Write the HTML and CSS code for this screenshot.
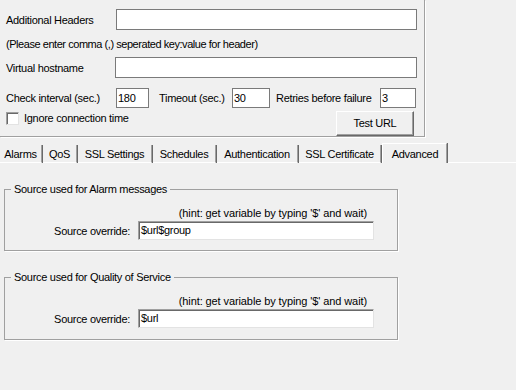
FILE: index.html
```html
<!DOCTYPE html>
<html>
<head>
<meta charset="utf-8">
<link rel="stylesheet" href="styles.css">
</head>
<body>
<div class="top">
  <div class="row r1">
    <span class="lbl w110">Additional Headers</span>
    <span class="box wide"></span>
  </div>
  <div class="row r2">(Please enter comma (,) seperated key:value for header)</div>
  <div class="row r3">
    <span class="lbl w109">Virtual hostname</span>
    <span class="box wide2"></span>
  </div>
  <div class="row r4">
    <span class="lbl w110">Check interval (sec.)</span>
    <span class="box small w33">180</span>
    <span class="lbl w73 ml10">Timeout (sec.)</span>
    <span class="box small w38">30</span>
    <span class="lbl w104 ml6">Retries before failure</span>
    <span class="box small w36">3</span>
  </div>
  <div class="row r5">
    <span class="check"></span>
    <span class="lbl">Ignore connection time</span>
    <span class="btn">Test URL</span>
  </div>
</div>

<div class="tabs">
  <span class="tab t1">Alarms</span>
  <span class="tab t2">QoS</span>
  <span class="tab t3">SSL Settings</span>
  <span class="tab t4">Schedules</span>
  <span class="tab t5">Authentication</span>
  <span class="tab t6">SSL Certificate</span>
  <span class="tab active t7">Advanced</span>
  <span class="tabfill"></span>
</div>

<fieldset class="grp g1">
  <legend>Source used for Alarm messages</legend>
  <div class="hint">(hint: get variable by typing '$' and wait)</div>
  <div class="ovr">
    <span class="olbl">Source override:</span>
    <span class="sunk">$url$group</span>
  </div>
</fieldset>

<fieldset class="grp g2">
  <legend>Source used for Quality of Service</legend>
  <div class="hint">(hint: get variable by typing '$' and wait)</div>
  <div class="ovr">
    <span class="olbl">Source override:</span>
    <span class="sunk">$url</span>
  </div>
</fieldset>
</body>
</html>
```
FILE: styles.css
```css
html, body {
  margin: 0;
  padding: 0;
  background: #f0f0f0;
  font-family: "Liberation Sans", Arial, sans-serif;
  font-size: 11px;
  letter-spacing: -0.3px;
  color: #000;
  width: 516px;
  height: 390px;
  overflow: hidden;
}

.top {
  box-sizing: border-box;
  width: 425px;
  height: 137px;
  padding-top: 9px;
  border-right: 1px solid #a0a0a0;
  border-bottom: 1px solid #a0a0a0;
  box-shadow: 1px 1px 0 #fff;
}

.row {
  display: flex;
  align-items: center;
  padding-left: 6px;
}

.r1 { height: 21px; }
.r2 { height: 27px; letter-spacing: -0.45px; }
.r3 { height: 21px; }
.r4 { margin-top: 10px; height: 20px; }
.r5 { margin-top: 3px; height: 25px; align-items: flex-start; }

.lbl { white-space: nowrap; }
.w110 { width: 110px; }
.w109 { width: 109px; }
.w73 { width: 73px; }
.w104 { width: 104px; }
.ml10 { margin-left: 10px; }
.ml6 { margin-left: 6px; }

.box {
  box-sizing: border-box;
  display: block;
  background: #fff;
  border: 1px solid #7a7a7a;
  height: 100%;
}
.wide { width: 301px; }
.wide2 { width: 302px; }
.small {
  padding-left: 1px;
  line-height: 18px;
}
.w33 { width: 33px; }
.w38 { width: 38px; }
.w36 { width: 36px; }

.check {
  box-sizing: border-box;
  width: 13px;
  height: 13px;
  margin-top: 1px;
  margin-right: 5px;
  background: #fff;
  border: 1px solid;
  border-color: #a0a0a0 #e3e3e3 #e3e3e3 #a0a0a0;
  box-shadow: inset 1px 1px 0 #696969;
}
.r5 .lbl { line-height: 14px; }

.btn {
  box-sizing: border-box;
  margin-left: auto;
  margin-right: 10px;
  width: 78px;
  height: 25px;
  line-height: 23px;
  text-align: center;
  background: #f0f0f0;
  border: 1px solid;
  border-color: #fff #696969 #696969 #fff;
  box-shadow: inset -1px -1px 0 #a0a0a0;
}

.tabs {
  display: flex;
  align-items: flex-end;
  margin-top: 6px;
  height: 20px;
}
.tab {
  box-sizing: border-box;
  height: 18px;
  line-height: 18px;
  text-align: center;
  white-space: nowrap;
  border-right: 1px solid #a0a0a0;
  border-bottom: 1px solid #fff;
  box-shadow: 1px 0 0 #696969;
}
.t1 { width: 42px; margin-right: 1px; }
.t2 { width: 34px; margin-right: 1px; }
.t3 { width: 74px; margin-right: 1px; }
.t4 { width: 63px; margin-right: 1px; }
.t5 { width: 81px; margin-right: 1px; }
.t6 { width: 82px; margin-right: 1px; }
.tab.active {
  width: 65px;
  height: 20px;
  line-height: 21px;
  border-top: 1px solid #fff;
  border-left: 1px solid #fff;
  border-bottom: 0;
  margin-right: 1px;
  padding-left: 1px;
}
.tabfill {
  flex: 1;
  height: 1px;
  background: #fff;
}

.grp {
  margin: 0 0 0 4px;
  width: 394px;
  box-sizing: border-box;
  padding: 0 0 10px 0;
  border: 1px solid #a0a0a0;
  box-shadow: 1px 1px 0 #fff;
  min-width: 0;
}
.g1 { margin-top: 20px; }
.g2 { margin-top: 20px; padding-bottom: 11px; }
.grp legend {
  margin-left: 6px;
  padding: 0 3px;
  line-height: 13px;
}
.hint {
  padding-top: 11px;
  line-height: 12px;
  text-align: right;
  padding-right: 30px;
  white-space: nowrap;
  letter-spacing: -0.1px;
}
.ovr {
  display: flex;
  align-items: center;
  margin-top: 2px;
}
.olbl {
  width: 125px;
  text-align: right;
  margin-right: 8px;
  white-space: nowrap;
}
.sunk {
  box-sizing: border-box;
  width: 236px;
  height: 19px;
  line-height: 17px;
  padding-left: 2px;
  background: #fff;
  border: 1px solid;
  border-color: #a0a0a0 #e3e3e3 #e3e3e3 #a0a0a0;
  box-shadow: inset 1px 1px 0 #696969;
}
```
